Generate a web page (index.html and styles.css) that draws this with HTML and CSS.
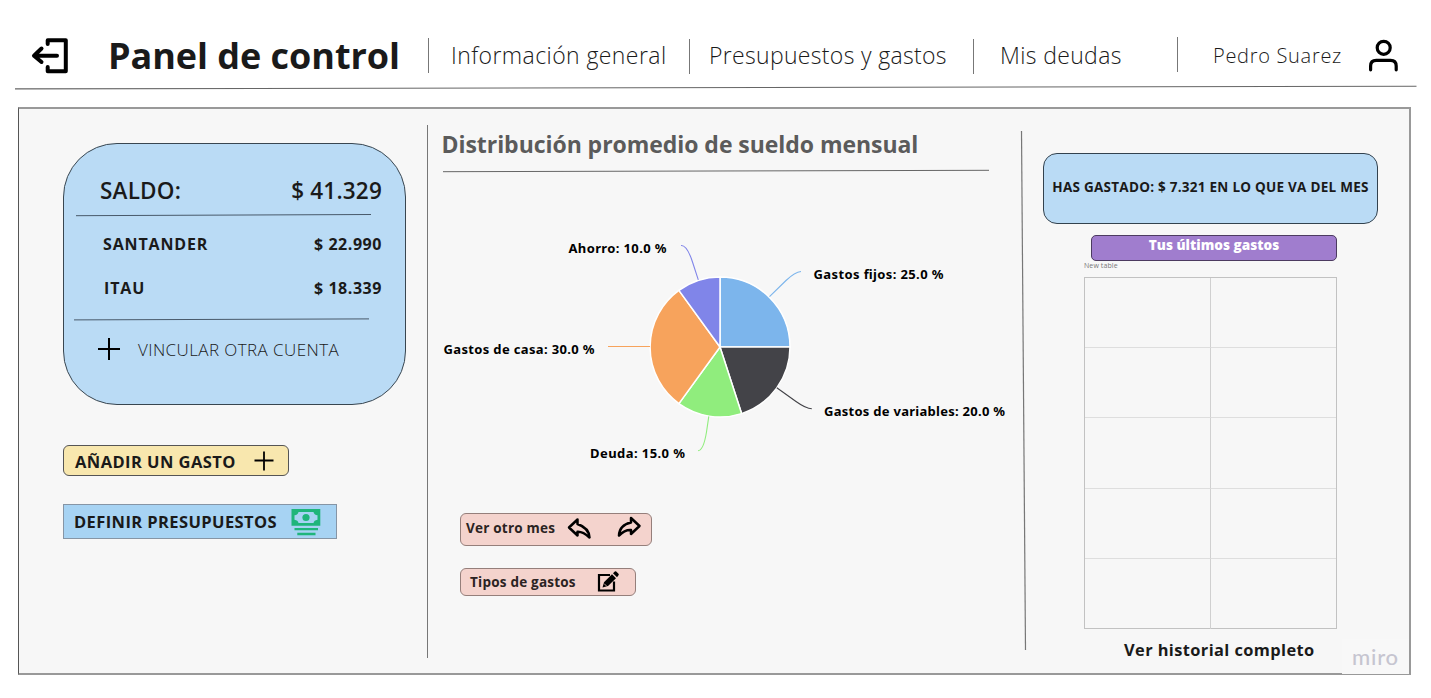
FILE: index.html
```html
<!DOCTYPE html>
<html lang="es">
<head>
<meta charset="utf-8">
<title>Panel de control</title>
<link rel="stylesheet" href="styles.css">
</head>
<body>
<header class="topbar">
  <svg class="exit" width="38" height="38" viewBox="0 0 38 38" fill="none" stroke="#000" stroke-width="4" stroke-linecap="round" stroke-linejoin="round"><path d="M16.700 7V3.200H34.800V34.200H16.700V30"/><path d="M26 18.800H3.500M10.500 11.500L3 18.800L10.500 25"/></svg>
  <h1 class="brand"><span>Panel de control</span></h1>
  <i class="sep sep-a"></i>
  <a class="nav nav-info"><span>Información general</span></a>
  <i class="sep sep-b"></i>
  <a class="nav nav-budget"><span>Presupuestos y gastos</span></a>
  <i class="sep sep-b"></i>
  <a class="nav nav-debt"><span>Mis deudas</span></a>
  <i class="sep sep-c"></i>
  <span class="user">Pedro Suarez</span>
  <svg class="avatar" width="32" height="34" viewBox="0 0 32 34" fill="none" stroke="#000" stroke-width="3.200" stroke-linecap="round"><circle cx="15.700" cy="8.800" r="6.500"/><path d="M2.600 30.800V27Q2.600 21.300 8.300 21.300H22.500Q28.200 21.300 28.200 27V30.800"/></svg>
</header>
<svg class="topline" width="1431" height="6" viewBox="0 0 1431 6"><path d="M15 3.900L1416.500 1.300" stroke="#666" stroke-width="1.100"/></svg>
<main class="panel">
  <section class="left">
    <div class="card">
      <div class="row total"><b class="t-saldo">SALDO:</b><b class="t-total">$ 41.329</b></div>
      <svg class="rule r1" width="296" height="4"><path d="M0 2.700L295 1.500" stroke="#48596a"/></svg>
      <div class="row bank"><b class="t-sant">SANTANDER</b><b class="t-amount">$ 22.990</b></div>
      <div class="row bank"><b class="t-itau">ITAU</b><b class="t-amount">$ 18.339</b></div>
      <svg class="rule r2" width="296" height="4"><path d="M0 2.900L295 1.900" stroke="#48596a"/></svg>
      <div class="link"><svg width="22" height="22"><path d="M11 0V22M0 11H22" stroke="#000" stroke-width="2"/></svg><span class="t-link">VINCULAR OTRA CUENTA</span></div>
    </div>
    <div class="btn add"><b class="t-add">AÑADIR UN GASTO</b><svg width="20" height="20"><path d="M10 .5V19.500M.5 9.500H19.500" stroke="#000" stroke-width="1.800"/></svg></div>
    <div class="btn define"><b class="t-def">DEFINIR PRESUPUESTOS</b><svg width="30" height="28" viewBox="0 0 30 28"><path fill="#1fb57b" fill-rule="evenodd" d="M.5 1H29.300V17.800H.5ZM7.500 4Q7 6.800 3.500 7.300V11.700Q7 12.200 7.500 15H22.500Q23 12.200 26.500 11.700V7.300Q23 6.800 22.500 4Z"/><circle cx="15" cy="9.500" r="3.600" fill="#1fb57b"/><path d="M3.500 21.100H27M6.300 26H24.500" stroke="#1fb57b" stroke-width="2.300"/></svg></div>
  </section>
  <svg class="divider" width="3" height="533"><path d="M1.500 0V533" stroke="#777"/></svg>
  <section class="middle">
    <h2 class="heading"><span>Distribución promedio de sueldo mensual</span></h2>
    <svg class="underline" width="546" height="4"><path d="M0 2.700L546 1.300" stroke="#666"/></svg>
    <svg class="chart" width="580" height="240" viewBox="440 230 580 240">
      <g stroke="#fff" stroke-width="1.500" stroke-linejoin="round">
        <path fill="#7cb5ec" d="M720 347V277A70 70 0 0 1 790 347Z"/>
        <path fill="#434348" d="M720 347H790A70 70 0 0 1 741.600 413.600Z"/>
        <path fill="#90ed7d" d="M720 347L741.600 413.600A70 70 0 0 1 678.900 403.600Z"/>
        <path fill="#f7a35c" d="M720 347L678.900 403.600A70 70 0 0 1 678.900 290.400Z"/>
        <path fill="#8085e9" d="M720 347L678.900 290.400A70 70 0 0 1 720 277Z"/>
      </g>
      <g fill="none" stroke-width="1.100">
        <path stroke="#7cb5ec" d="M769.500 296.700L786 280.500Q795 272 801 271.500"/>
        <path stroke="#434348" d="M776.800 387.700L796 401.500Q806 408.600 811.800 408.800"/>
        <path stroke="#90ed7d" d="M708.800 416.300L706.500 432Q703.500 450.500 698 450.700"/>
        <path stroke="#f7a35c" d="M650 346.500H608"/>
        <path stroke="#8085e9" d="M698.300 279.800L692.500 262Q687 245 681 245.500"/>
      </g>
      <g class="labels">
        <text x="568.500" y="253" textLength="98">Ahorro: 10.0 %</text>
        <text x="813.500" y="279" textLength="130">Gastos fijos: 25.0 %</text>
        <text x="443.500" y="354" textLength="151">Gastos de casa: 30.0 %</text>
        <text x="824" y="416" textLength="181">Gastos de variables: 20.0 %</text>
        <text x="590" y="458" textLength="95">Deuda: 15.0 %</text>
      </g>
    </svg>
    <div class="btn month"><b class="t-month">Ver otro mes</b>
      <svg width="25" height="23" viewBox="0 0 25 23" fill="none" stroke="#000" stroke-width="2.500" stroke-linejoin="round"><path d="M10.500 1.500L2 9.500L10.500 17.500V13.800Q16 13.500 22.500 19.500Q22 10 10.500 6Z"/></svg>
      <svg class="fwd" width="25" height="23" viewBox="0 0 25 23" fill="none" stroke="#000" stroke-width="2.500" stroke-linejoin="round"><path d="M14 2L22.500 10L14 18V14Q8 13.500 2 19.500Q2.500 9 14 6.500Z"/></svg>
    </div>
    <div class="btn types"><b class="t-types">Tipos de gastos</b>
      <svg width="23" height="22" viewBox="0 0 23 22"><path d="M13 4H2V19.500H17V10.500" fill="none" stroke="#000" stroke-width="2.200"/><path d="M5.500 16.500L7 11.200L15 3.300L19 7.300L11 15ZM16 2.300L17.800.5Q18.500 0 19.200.6L21.500 2.700Q22.200 3.500 21.500 4.200L20 6.300Z"/><path d="M7.200 12.700L9.800 15.300" stroke="#f4d3cd" stroke-width=".8"/></svg>
    </div>
  </section>
  <svg class="divider slanted" width="8" height="520"><path d="M1.500 0L5.500 519" stroke="#777" stroke-width="1.200"/></svg>
  <section class="right">
    <div class="spent"><b class="t-spent">HAS GASTADO: $ 7.321 EN LO QUE VA DEL MES</b></div>
    <div class="latest"><b class="t-latest">Tus últimos gastos</b></div>
    <div class="caption"><span>New table</span></div>
    <div class="grid"><i></i><i></i><i></i><i></i><i></i><i></i><i></i><i></i><i></i><i></i></div>
    <div class="history"><b class="t-hist">Ver historial completo</b></div>
  </section>
  <div class="watermark"><span>miro</span></div>
</main>
</body>
</html>
```
FILE: styles.css
```css
* { box-sizing: border-box; }
body { margin: 0; width: 1431px; height: 698px; overflow: hidden; background: #fff; color: #1a1a1a; font-family: "Open Sans", sans-serif; white-space: nowrap; }
svg { display: block; flex: none; }
b { font-weight: 700; }
.topbar { display: flex; height: 85px; padding-left: 31px; align-items: flex-start; }
.exit { margin-top: 37px; }
.brand { margin: 36px 0 0 39px; width: 320px; font-size: 36px; line-height: 40px; font-weight: 700; letter-spacing: -.05px; }
.sep { width: 1px; height: 35px; background: #777; flex: none; }
.sep-a { margin-top: 38px; }
.sep-b { margin-top: 39px; }
.sep-c { margin-top: 37px; }
.nav { font-size: 23px; line-height: 30px; font-weight: 340; margin-top: 40px; flex: none; }
.nav-info { padding-left: 22px; width: 260px; letter-spacing: .42px; }
.nav-budget { padding-left: 19px; width: 283px; letter-spacing: .32px; }
.nav-debt { padding-left: 26px; width: 203px; letter-spacing: .35px; }
.user { font-size: 20px; line-height: 30px; font-weight: 340; margin-top: 41px; padding-left: 35px; width: 190px; flex: none; letter-spacing: .7px; }
.avatar { margin-top: 39px; }
.topline { height: 6px; }
.panel { position: relative; display: flex; margin: 16px 0 0 18px; width: 1393px; height: 568px; background: #f7f7f7; border: solid #999; border-width: 2px 2px 2px 1px; border-left-color: #555; }
.left { width: 407px; padding: 34px 0 0 44px; }
.card { width: 343px; height: 262px; background: #badbf5; border: 1px solid #394650; border-radius: 54px; padding-top: 31px; }
.row { display: flex; justify-content: space-between; align-items: center; padding: 0 23px 0 39px; }
.total { height: 30px; font-size: 23px; padding-left: 36px; }
.total b { font-weight: 650; font-size: 22.5px; letter-spacing: .2px; }
.bank { height: 44px; font-size: 16px; letter-spacing: .85px; }
.bank .t-amount { letter-spacing: .55px; }
.t-itau { padding-left: 1px; }
.r1 { margin: 8px 0 5px 12px; }
.r2 { margin: 7px 0 13px 10px; }
.link { display: flex; align-items: center; height: 30px; padding-left: 34px; gap: 18px; font-size: 17px; font-weight: 300; letter-spacing: .42px; }
.btn { display: flex; align-items: center; border: 1px solid #555; border-radius: 6px; font-size: 16.5px; }
.btn b { flex: none; }
.add { width: 226px; height: 31px; margin-top: 40px; padding-left: 11px; background: #f8e7ae; letter-spacing: .43px; }
.add b { width: 179px; padding-top: 2px; }
.define { width: 274px; height: 35px; margin-top: 28px; padding-left: 10px; background: #a7d3f3; border-color: #8695a5; border-radius: 0; letter-spacing: .4px; }
.define b { width: 217px; }
.divider { margin-top: 16px; }
.middle { width: 592px; padding-top: 19px; }
.heading { margin: 0 0 0 12.5px; font-size: 23px; line-height: 32px; font-weight: 700; color: #5b5b5b; letter-spacing: -.05px; }
.underline { margin: 9px 0 0 14px; }
.chart { margin: 57px 0 0 11px; overflow: visible; }
.labels { font: 700 13px "Noto Sans", sans-serif; fill: #000; }
.month, .types { font-size: 13.5px; background: #f4d3cd; border-color: #957f7b; color: #2b2322; margin-left: 31px; letter-spacing: .22px; }
.month { width: 192px; height: 33px; margin-top: 43px; padding-left: 5px; }
.month b { width: 101px; padding-bottom: 3px; }
.fwd { margin-left: 25px; margin-top: -4px; }
.types { width: 176px; height: 28px; margin-top: 22px; padding-left: 9px; }
.types b { width: 127px; }
.slanted { margin-top: 22px; margin-left: -1px; }
.right { width: 370px; padding: 44px 0 0 15px; }
.spent { display: flex; align-items: center; justify-content: center; width: 335px; height: 71px; padding-bottom: 4px; background: #badbf5; border: 1px solid #33424e; border-radius: 14px; font-size: 13.5px; letter-spacing: .26px; }
.latest { display: flex; justify-content: center; width: 246px; height: 26px; margin: 11px 0 0 48px; background: #a07dce; border: 1px solid #4c3b60; border-radius: 5px; color: #fff; font-size: 13.6px; line-height: 18px; }
.latest b { font-weight: 800; }
.caption { height: 16px; margin-left: 41px; font-size: 7px; line-height: 10px; letter-spacing: .1px; color: #777; }
.grid { display: grid; grid-template-columns: 126px 125px; grid-template-rows: repeat(5, 70.2px); width: 253px; height: 352px; margin-left: 41px; border: 1px solid #c2c2c2; }
.grid i { border-bottom: 1px solid #dedede; }
.grid i:nth-child(odd) { border-right: 1px solid #d0d0d0; }
.grid i:nth-child(n+9) { border-bottom: 0; }
.history { margin: 9px 0 0 81px; font-size: 16.4px; line-height: 24px; letter-spacing: .4px; }
.watermark { position: absolute; right: 0; bottom: -1px; width: 67px; height: 35px; padding-left: 10px; background: #f8f8f8; color: #c6c5d0; font: 500 22px/36px Lato, sans-serif; letter-spacing: .8px; }
```
